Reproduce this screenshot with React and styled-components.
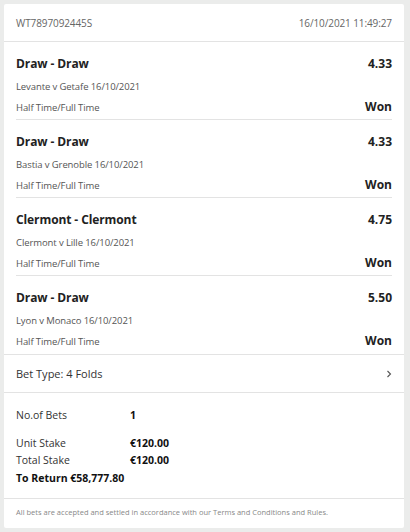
import React from "react";
import styled, { createGlobalStyle } from "styled-components";

const Global = createGlobalStyle`
  html, body { margin: 0; padding: 0; background: #ebeceb; }
  body { font-family: "Open Sans", "Noto Sans", sans-serif; color: #222; }
  * { box-sizing: border-box; }
`;

const Page = styled.div`
  padding: 4px 6px 6px 4px;
`;

const Card = styled.div`
  width: 400px;
  background: #fff;
  border-radius: 2px;
`;

const Header = styled.div`
  display: flex;
  justify-content: space-between;
  align-items: center;
  height: 38px;
  padding: 0 12px;
  border-bottom: 1px solid #e3e3e3;
  font-size: 10px;
  color: #666;
  letter-spacing: -0.1px;
`;

const Selections = styled.div`
  padding: 0 12px;
  border-bottom: 1px solid #e3e3e3;
`;

const Selection = styled.div`
  height: 78px;
  padding-top: 13px;
  border-bottom: ${(p) => (p.$last ? "none" : "1px solid #e3e3e3")};
`;

const Row = styled.div`
  display: flex;
  justify-content: space-between;
  align-items: baseline;
`;

const Title = styled.div`
  font-size: 12px;
  font-weight: 700;
  color: #222;
  letter-spacing: -0.1px;
`;

const Odds = styled.div`
  font-size: 12px;
  font-weight: 700;
  color: #222;
`;

const Event = styled.div`
  margin-top: 8px;
  font-size: 9.5px;
  color: #555;
  letter-spacing: -0.1px;
`;

const Market = styled.div`
  font-size: 9.5px;
  color: #555;
  letter-spacing: -0.1px;
`;

const Result = styled.div`
  font-size: 12px;
  font-weight: 700;
  color: #222;
`;

const MarketRow = styled(Row)`
  margin-top: 5px;
`;

const BetType = styled.div`
  display: flex;
  justify-content: space-between;
  align-items: center;
  height: 38px;
  padding: 0 12px;
  border-bottom: 1px solid #e3e3e3;
  font-size: 11px;
  color: #333;
`;

const Summary = styled.div`
  padding: 13px 12px 11px;
  border-bottom: 1px solid #e3e3e3;
  font-size: 10.5px;
  color: #333;
`;

const SumRow = styled.div`
  display: grid;
  grid-template-columns: 114px auto;
  height: 17px;
  align-items: center;
  margin-bottom: ${(p) => (p.$gap ? "11px" : "0")};
`;

const Value = styled.span`
  font-weight: 700;
  color: #111;
`;

const Return = styled.div`
  height: 19px;
  display: flex;
  align-items: center;
  font-weight: 700;
  color: #111;
`;

const Footer = styled.div`
  padding: 8px 12px 0;
  height: 29px;
  font-size: 7.5px;
  color: #888;
`;

const Chevron = () => (
  <svg width="6" height="8" viewBox="0 0 6 8" fill="none">
    <path d="M1.5 1 L4.5 4 L1.5 7" stroke="#555" strokeWidth="1.1" />
  </svg>
);

const bets = [
  { t: "Draw - Draw", o: "4.33", e: "Levante v Getafe 16/10/2021" },
  { t: "Draw - Draw", o: "4.33", e: "Bastia v Grenoble 16/10/2021" },
  { t: "Clermont - Clermont", o: "4.75", e: "Clermont v Lille 16/10/2021" },
  { t: "Draw - Draw", o: "5.50", e: "Lyon v Monaco 16/10/2021" },
];

export default function App() {
  return (
    <>
      <Global />
      <Page>
        <Card>
          <Header>
            <span>WT7897092445S</span>
            <span>16/10/2021 11:49:27</span>
          </Header>
          <Selections>
            {bets.map((b, i) => (
              <Selection key={i} $last={i === bets.length - 1}>
                <Row>
                  <Title>{b.t}</Title>
                  <Odds>{b.o}</Odds>
                </Row>
                <Event>{b.e}</Event>
                <MarketRow>
                  <Market>Half Time/Full Time</Market>
                  <Result>Won</Result>
                </MarketRow>
              </Selection>
            ))}
          </Selections>
          <BetType>
            <span>Bet Type: 4 Folds</span>
            <Chevron />
          </BetType>
          <Summary>
            <SumRow $gap>
              <span>No.of Bets</span>
              <Value>1</Value>
            </SumRow>
            <SumRow>
              <span>Unit Stake</span>
              <Value>€120.00</Value>
            </SumRow>
            <SumRow>
              <span>Total Stake</span>
              <Value>€120.00</Value>
            </SumRow>
            <Return>To Return €58,777.80</Return>
          </Summary>
          <Footer>
            All bets are accepted and settled in accordance with our Terms and Conditions and Rules.
          </Footer>
        </Card>
      </Page>
    </>
  );
}
